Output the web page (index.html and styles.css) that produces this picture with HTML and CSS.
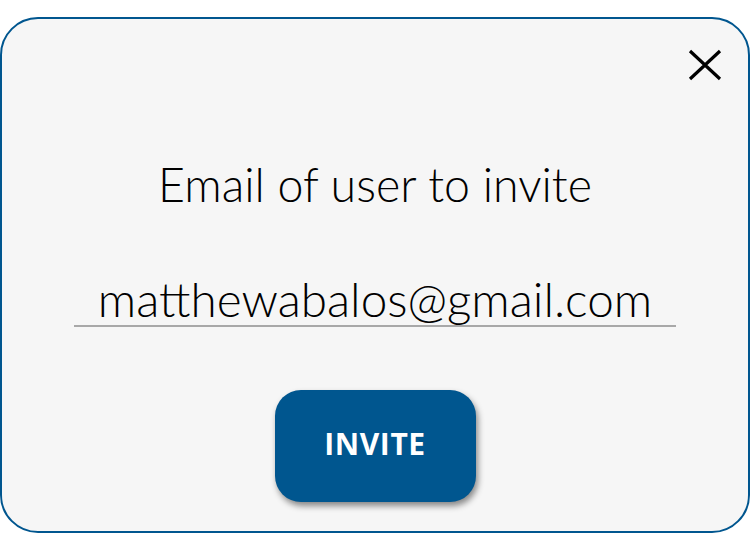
FILE: index.html
```html
<!DOCTYPE html>
<html>
<head>
<meta charset="utf-8">
<link rel="stylesheet" href="styles.css">
</head>
<body>
<div class="card">
  <div class="top-row">
    <button class="close" aria-label="Close">
      <svg width="34" height="32" viewBox="0 0 34 32"><path d="M2 2 L32 30 M32 2 L2 30" stroke="#000" stroke-width="3.2" fill="none"/></svg>
    </button>
  </div>
  <h1 class="title">Email of user to invite</h1>
  <div class="field">matthewabalos@gmail.com</div>
  <button class="invite">INVITE</button>
</div>
</body>
</html>
```

FILE: styles.css
```css
html, body {
  margin: 0;
  padding: 0;
  background: #ffffff;
}
body {
  width: 750px;
  height: 560px;
  overflow: hidden;
}
.card {
  box-sizing: border-box;
  margin-top: 17px;
  width: 750px;
  height: 516px;
  border: 2px solid #00568f;
  border-radius: 38px;
  background: #f6f6f6;
  display: flex;
  flex-direction: column;
  align-items: center;
  font-family: Lato, "Open Sans", sans-serif;
}
.top-row {
  align-self: stretch;
  display: flex;
  justify-content: flex-end;
  padding: 30px 26px 0 0;
}
.close {
  border: 0;
  background: none;
  padding: 0;
  width: 34px;
  height: 32px;
  display: block;
}
.close svg { display: block; }
.title {
  margin: 75px 0 0 0;
  font-weight: 300;
  font-size: 46.5px;
  line-height: 56px;
  color: #000;
}
.field {
  margin-top: 61px;
  width: 602px;
  box-sizing: border-box;
  border-bottom: 2px solid #a8a8a8;
  text-align: center;
  font-weight: 300;
  font-size: 47.7px;
  line-height: 52px;
  color: #000;
}
.invite {
  margin-top: 63px;
  width: 201px;
  height: 112px;
  padding: 0 0 6px 0;
  border: 0;
  border-radius: 26px;
  background: #00568f;
  color: #fff;
  font-family: "Open Sans", sans-serif;
  font-weight: 700;
  font-size: 30px;
  letter-spacing: 0.6px;
  box-shadow: 2px 4px 6px rgba(0, 0, 0, 0.45);
}
```
